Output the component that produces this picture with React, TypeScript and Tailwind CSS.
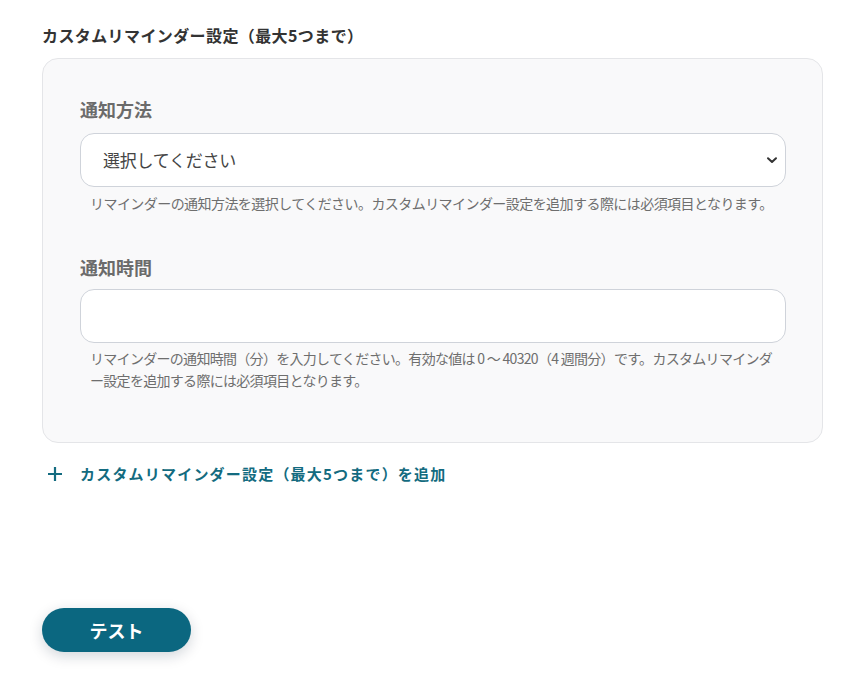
import React from "react";

const font = { fontFamily: '"Noto Sans CJK JP", "Noto Sans", sans-serif' };

export default function App() {
  return (
    <div
      className="w-[866px] h-[681px] bg-white pt-[24px] pl-[42px] pr-[43px] text-[#333]"
      style={font}
    >
      <h2 className="text-[16px] leading-[22px] font-bold tracking-[0.025em] text-[#333]">
        カスタムリマインダー設定（最大5つまで）
      </h2>

      <div className="mt-[12px] rounded-[16px] border border-[#e4e5e8] bg-[#f9f9fa] pt-[37px] pb-[51px] pl-[37px] pr-[36px]">
        <div className="text-[18px] leading-[26px] font-bold text-[#6b6b6b]">
          通知方法
        </div>
        <div className="relative mt-[11px]">
          <select
            className="block w-full h-[54px] appearance-none rounded-[14px] border border-[#cfd3da] bg-white pl-[22px] pr-[40px] text-[17px] tracking-[-0.015em] text-[#444] outline-none"
            style={font}
            defaultValue=""
          >
            <option value="">選択してください</option>
          </select>
          <svg
            className="pointer-events-none absolute right-[8px] top-1/2 -translate-y-1/2"
            width="12"
            height="12"
            viewBox="0 0 12 12"
          >
            <path d="M2 4.2 L6 8 L10 4.2" fill="none" stroke="#333" strokeWidth="2" strokeLinecap="round" strokeLinejoin="round" />
          </svg>
        </div>
        <p className="mt-[5px] pl-[10px] pr-[6px] text-[14px] leading-[22px] tracking-[-0.04em] text-[#6e6e6e]">
          リマインダーの通知方法を選択してください。カスタムリマインダー設定を追加する際には必須項目となります。
        </p>

        <div className="mt-[40px] text-[18px] leading-[26px] font-bold text-[#6b6b6b]">
          通知時間
        </div>
        <input
          type="text"
          className="mt-[9px] block w-full h-[54px] rounded-[14px] border border-[#cfd3da] bg-white px-[22px] text-[16px] outline-none"
          style={font}
        />
        <p className="mt-[4px] pl-[10px] pr-[6px] text-[14px] leading-[22px] tracking-[-0.05em] text-[#6e6e6e]">
          リマインダーの通知時間（分）を入力してください。有効な値は 0 〜 40320（4 週間分）です。カスタムリマインダー設定を追加する際には必須項目となります。
        </p>
      </div>

      <button className="mt-[19px] flex items-center h-[24px] text-[#136b80]">
        <svg width="16" height="16" viewBox="0 0 16 16" className="ml-[5px]">
          <path d="M8 1 V15 M1 8 H15" stroke="#136b80" strokeWidth="2.2" strokeLinecap="butt" />
        </svg>
        <span
          className="ml-[17px] text-[15px] leading-[24px] font-bold tracking-[0.08em]"
          style={font}
        >
          カスタムリマインダー設定（最大5つまで）を追加
        </span>
      </button>

      <button
        className="mt-[122px] flex h-[44px] w-[149px] items-center justify-center rounded-full bg-[#0b6780] text-[18px] font-bold text-white shadow-[0_4px_14px_rgba(0,30,50,0.18)]"
        style={font}
      >
        テスト
      </button>
    </div>
  );
}
